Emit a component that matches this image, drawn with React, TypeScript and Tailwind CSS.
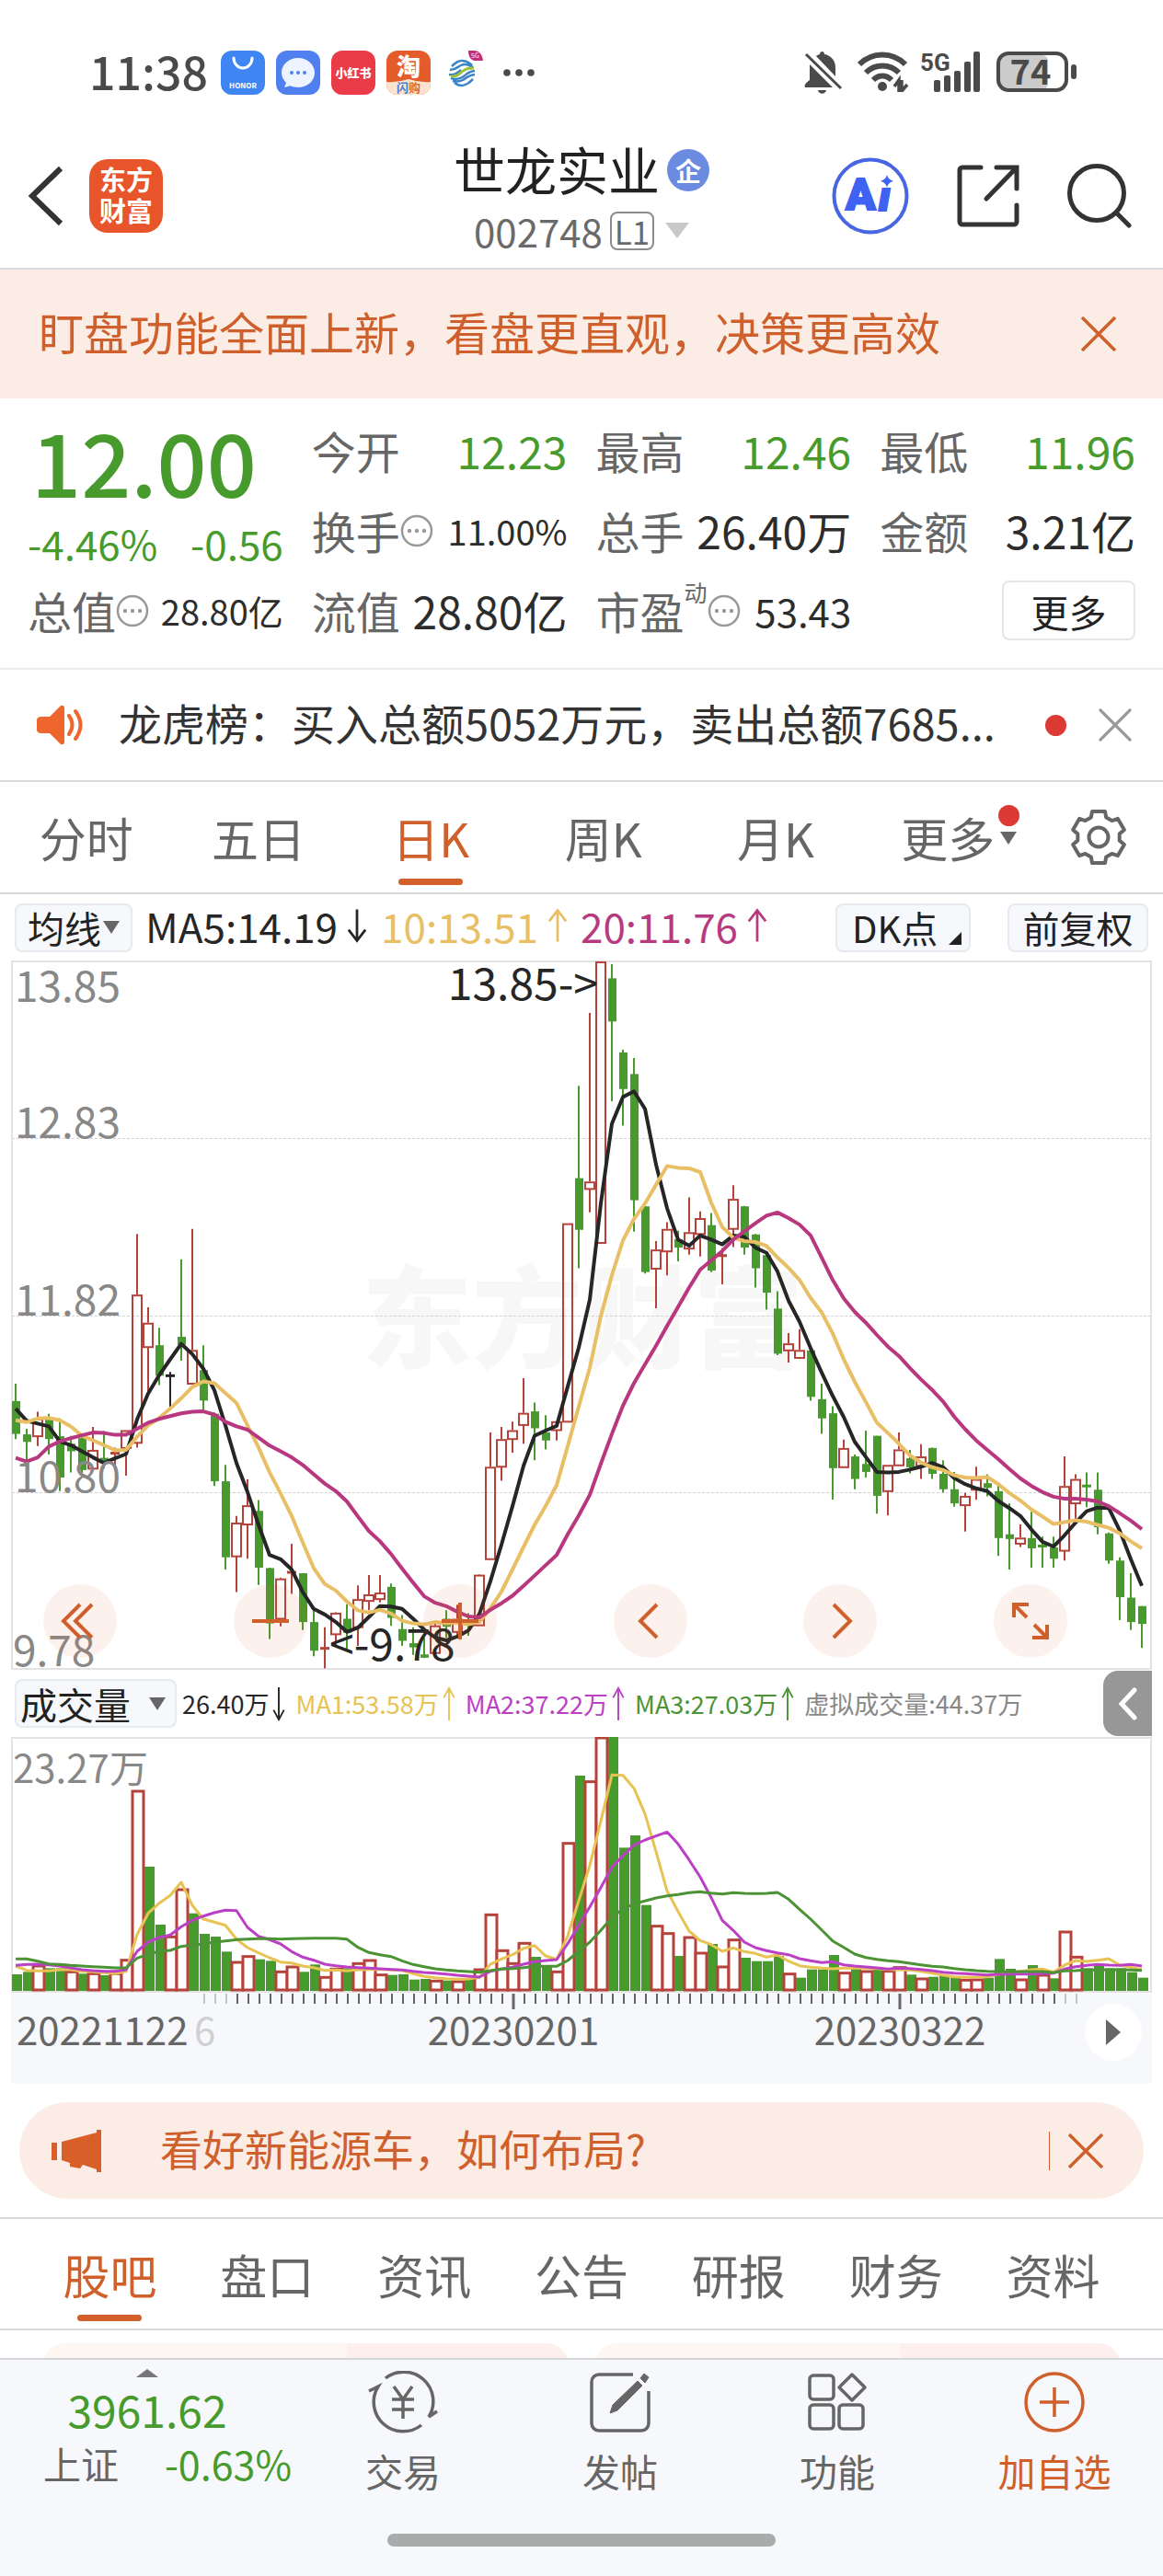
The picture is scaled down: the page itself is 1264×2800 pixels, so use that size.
import type { ReactNode } from 'react';

const FONT = "font-['Noto_Sans_CJK_SC','Noto_Sans',sans-serif]";

const GREEN = '#479b2c';
const RED = '#b5433c';
const BLACK = '#262626';

// g = falling, r = rising, k = unchanged
type Kind = 'g' | 'r' | 'k';
// kind, wick top, wick bottom, body top, body bottom
type Candle = [Kind, number, number, number, number];

const candles: Candle[] = [
  ['g', 929, 1047, 966, 1036], ['g', 1025, 1096, 1037, 1053], ['r', 989, 1062, 1003, 1041],
  ['g', 993, 1080, 1000, 1047], ['g', 1003, 1158, 1041, 1129], ['g', 1040, 1118, 1057, 1073],
  ['g', 1040, 1120, 1045, 1113], ['r', 1021, 1112, 1070, 1110], ['g', 1030, 1110, 1087, 1096],
  ['r', 1065, 1115, 1077, 1077], ['r', 1028, 1125, 1028, 1066], ['r', 610, 1065, 739, 1055],
  ['r', 766, 950, 799, 851], ['g', 810, 932, 847, 912], ['k', 904, 985, 912, 912],
  ['g', 664, 880, 829, 846], ['r', 599, 930, 857, 929], ['g', 847, 985, 900, 965],
  ['g', 990, 1147, 993, 1137], ['g', 1102, 1325, 1137, 1299], ['r', 1211, 1373, 1225, 1297],
  ['r', 1133, 1302, 1188, 1229], ['g', 1177, 1358, 1200, 1321], ['g', 1321, 1473, 1322, 1440],
  ['r', 1342, 1446, 1344, 1430], ['r', 1270, 1377, 1331, 1331], ['g', 1333, 1454, 1333, 1437],
  ['g', 1410, 1510, 1437, 1498], ['r', 1448, 1536, 1493, 1493], ['r', 1416, 1490, 1417, 1463],
  ['g', 1399, 1495, 1430, 1460], ['r', 1359, 1488, 1388, 1448], ['r', 1337, 1412, 1378, 1392],
  ['r', 1337, 1395, 1374, 1388], ['g', 1355, 1445, 1362, 1428], ['g', 1422, 1488, 1452, 1477],
  ['g', 1448, 1507, 1482, 1491], ['g', 1470, 1514, 1506, 1513], ['r', 1440, 1510, 1444, 1503],
  ['g', 1412, 1470, 1430, 1447], ['r', 1400, 1470, 1430, 1458], ['g', 1418, 1466, 1436, 1441],
  ['r', 1335, 1444, 1336, 1444], ['r', 1033, 1303, 1106, 1303], ['r', 1021, 1136, 1047, 1106],
  ['r', 1010, 1076, 1028, 1047], ['r', 917, 1057, 991, 1017], ['g', 969, 1092, 988, 1024],
  ['g', 996, 1069, 1033, 1050], ['r', 1008, 1050, 1009, 1028], ['r', 587, 1010, 587, 1010],
  ['g', 294, 683, 491, 601], ['r', 139, 564, 498, 514], ['r', 29, 629, 29, 629],
  ['g', 35, 327, 65, 157], ['g', 217, 379, 223, 301], ['g', 235, 605, 269, 538],
  ['g', 550, 694, 551, 691], ['r', 625, 768, 643, 684], ['r', 585, 698, 599, 647],
  ['g', 603, 668, 621, 639], ['r', 532, 654, 606, 641], ['r', 562, 658, 576, 610],
  ['g', 565, 691, 591, 688], ['r', 640, 717, 656, 656], ['r', 506, 638, 535, 599],
  ['g', 550, 654, 551, 639], ['g', 610, 724, 611, 683], ['g', 650, 771, 655, 735],
  ['g', 732, 868, 769, 865], ['r', 821, 884, 843, 858], ['r', 813, 875, 857, 874],
  ['g', 857, 965, 858, 957], ['g', 929, 1036, 962, 1003], ['g', 977, 1176, 992, 1109],
  ['r', 1048, 1108, 1066, 1107], ['g', 1080, 1154, 1084, 1132], ['g', 1029, 1129, 1100, 1117],
  ['g', 1040, 1206, 1040, 1168], ['r', 1102, 1210, 1102, 1158], ['r', 1033, 1104, 1069, 1103],
  ['g', 1070, 1120, 1088, 1107], ['r', 1058, 1132, 1084, 1104], ['g', 1065, 1132, 1066, 1121],
  ['g', 1092, 1161, 1121, 1154], ['g', 1117, 1191, 1154, 1184], ['r', 1162, 1244, 1168, 1188],
  ['r', 1106, 1176, 1132, 1155], ['g', 1122, 1169, 1141, 1151], ['g', 1145, 1296, 1158, 1258],
  ['g', 1184, 1325, 1250, 1260], ['r', 1229, 1277, 1257, 1270], ['g', 1202, 1321, 1258, 1280],
  ['g', 1255, 1321, 1275, 1275], ['g', 1255, 1321, 1278, 1302], ['r', 1084, 1306, 1147, 1285],
  ['r', 1122, 1225, 1132, 1184], ['g', 1118, 1192, 1147, 1147], ['g', 1118, 1250, 1155, 1235],
  ['g', 1246, 1313, 1248, 1306], ['g', 1299, 1433, 1306, 1384], ['g', 1333, 1454, 1385, 1437],
  ['g', 1403, 1492, 1403, 1441],
];

const ma5 = [
  982, 1008, 1014, 1020, 1052, 1060, 1073, 1086, 1098, 1088, 1079, 1005, 950, 911, 877, 844, 866, 897, 943, 1018,
  1098, 1160, 1230, 1294, 1303, 1325, 1373, 1409, 1421, 1437, 1458, 1449, 1426, 1403, 1404, 1409, 1430, 1453, 1470, 1476,
  1468, 1455, 1420, 1350, 1272, 1190, 1104, 1040, 1029, 1019, 935, 852, 750, 545, 375, 318, 306, 343, 462, 555,
  622, 635, 613, 622, 632, 613, 616, 639, 650, 690, 752, 797, 853, 905, 955, 1000, 1053, 1085, 1117, 1118,
  1117, 1112, 1106, 1098, 1107, 1130, 1143, 1152, 1158, 1179, 1194, 1211, 1240, 1266, 1276, 1252, 1225, 1201, 1193, 1194,
  1242, 1303, 1360,
];

const ma10 = [
  1007, 1011, 1003, 1002, 1007, 1020, 1040, 1050, 1060, 1071, 1070, 1042, 1018, 1002, 982, 960, 936, 924, 928, 949,
  970, 1018, 1065, 1118, 1163, 1211, 1267, 1322, 1356, 1370, 1393, 1412, 1417, 1411, 1419, 1434, 1440, 1442, 1437, 1440,
  1438, 1442, 1437, 1408, 1372, 1325, 1277, 1230, 1190, 1145, 1062, 978, 895, 785, 698, 624, 578, 545, 505, 465,
  469, 470, 478, 543, 595, 618, 625, 627, 635, 660, 682, 708, 746, 777, 822, 877, 925, 968, 1012, 1034,
  1057, 1082, 1097, 1107, 1113, 1124, 1129, 1130, 1128, 1143, 1162, 1178, 1197, 1212, 1228, 1224, 1220, 1223, 1230, 1236,
  1248, 1265, 1280,
];

const ma20 = [
  1087, 1095, 1086, 1063, 1052, 1045, 1039, 1033, 1034, 1038, 1038, 1025, 1012, 1004, 998, 992, 989, 988, 995, 1010,
  1020, 1027, 1044, 1061, 1073, 1086, 1102, 1122, 1142, 1158, 1180, 1212, 1243, 1265, 1292, 1323, 1353, 1382, 1396, 1403,
  1415, 1425, 1427, 1411, 1397, 1381, 1360, 1338, 1316, 1294, 1250, 1210, 1166, 1100, 1036, 976, 928, 888, 848, 806,
  765, 724, 686, 666, 646, 622, 604, 587, 571, 564, 576, 590, 613, 660, 708, 747, 776, 799, 825, 850,
  870, 896, 920, 942, 967, 999, 1026, 1050, 1070, 1090, 1111, 1131, 1147, 1160, 1170, 1174, 1174, 1176, 1180, 1190,
  1205, 1221, 1239,
];

const volumeKinds =
  'ggrggrgrgrrrggrrggggrrggrrggrrgrrrggggrgrgrrrrrggrrgrrggggrrgrrgrrggggrggggrgrgrrgrgggrrgggrgrgrrgggggg';

// top edge of each bar
const volumes = [
  1005, 997, 975, 985, 985, 994, 1003, 1000, 1008, 1000, 956, 405, 654, 843, 880, 726, 806, 873, 882, 931,
  963, 944, 956, 961, 994, 978, 997, 973, 1012, 985, 985, 967, 957, 1004, 1007, 1005, 1022, 1020, 1024, 1025,
  1026, 1018, 987, 808, 925, 967, 901, 948, 975, 994, 575, 357, 374, 231, 231, 592, 552, 779, 845, 869,
  945, 882, 933, 906, 978, 890, 951, 962, 962, 945, 1001, 1016, 989, 989, 942, 998, 987, 993, 989, 992,
  980, 1006, 1017, 1013, 1008, 1016, 1021, 1020, 1016, 955, 987, 1020, 975, 1005, 1018, 864, 946, 985, 978, 985,
  985, 998, 1016,
];

const vol5 = [
  978, 992, 994, 994, 990, 990, 995, 997, 1000, 1003, 995, 875, 806, 773, 748, 705, 780, 825, 835, 845,
  890, 918, 935, 951, 965, 968, 978, 983, 992, 991, 994, 990, 989, 989, 990, 992, 1003, 1012, 1016, 1019,
  1021, 1020, 1015, 972, 955, 941, 920, 911, 945, 956, 880, 765, 650, 505, 355, 356, 398, 482, 605, 733,
  800, 864, 895, 908, 930, 919, 931, 937, 949, 942, 962, 977, 982, 985, 987, 985, 985, 985, 986, 989,
  990, 991, 995, 1001, 1008, 1013, 1015, 1014, 1013, 1005, 998, 996, 990, 988, 998, 975, 960, 963, 959, 954,
  975, 982, 990,
];

const vol10 = [
  976, 973, 972, 974, 978, 984, 990, 993, 995, 995, 990, 930, 900, 885, 877, 850, 829, 815, 804, 796,
  797, 852, 881, 892, 906, 931, 949, 959, 972, 977, 981, 983, 985, 987, 989, 991, 995, 999, 1001, 1004,
  1008, 1011, 1014, 995, 988, 982, 972, 964, 960, 957, 905, 845, 785, 722, 656, 618, 584, 567, 554, 541,
  580, 632, 688, 755, 829, 862, 900, 918, 928, 935, 941, 954, 961, 967, 964, 974, 978, 981, 984, 988,
  985, 986, 989, 993, 998, 1001, 1003, 1005, 1007, 1005, 1004, 1004, 1004, 1003, 1001, 988, 980, 976, 973, 975,
  976, 973, 978,
];

const vol20 = [
  955, 955, 962, 971, 973, 976, 978, 980, 982, 984, 984, 952, 940, 930, 927, 914, 910, 906, 900, 896,
  892, 890, 889, 889, 890, 889, 888, 887, 887, 887, 890, 917, 934, 941, 947, 961, 973, 980, 987, 991,
  994, 996, 998, 993, 988, 986, 983, 979, 979, 979, 960, 930, 900, 862, 820, 792, 775, 766, 756, 749,
  745, 739, 736, 740, 743, 739, 741, 742, 741, 738, 760, 793, 825, 860, 896, 917, 939, 950, 956, 961,
  964, 969, 974, 979, 981, 986, 990, 993, 995, 996, 997, 996, 996, 996, 1000, 994, 993, 991, 991, 990,
  990, 991, 992,
];

const barX = (i: number) => 5 + 12 * i;
const priceY = (v: number) => (v - 27) * 0.51;
const volumeY = (v: number) => (v - 231) / 3;
const toPoints = (values: number[], y: (v: number) => number) =>
  values.map((v, i) => `${barX(i)},${y(v).toFixed(1)}`).join(' ');

const colorOf = (kind: string) => (kind === 'g' ? GREEN : kind === 'r' ? RED : BLACK);

function CandleMark({ index, candle }: { index: number; candle: Candle }) {
  const [kind, high, low, open, close] = candle;
  const x = barX(index);
  const top = priceY(open);
  const bottom = priceY(close);
  const color = colorOf(kind);
  if (bottom - top < 1) {
    return (
      <g stroke={color} strokeWidth="2">
        <path d={`M${x} ${priceY(high)}V${priceY(low)}`} />
        <path d={`M${x - 5} ${top}H${x + 5}`} strokeWidth="3" />
      </g>
    );
  }
  if (kind === 'g') {
    return (
      <g>
        <path d={`M${x} ${priceY(high)}V${priceY(low)}`} stroke={color} strokeWidth="2" />
        <rect x={x - 4} y={top} width="9" height={bottom - top} fill={color} />
      </g>
    );
  }
  return (
    <g stroke={color} strokeWidth="2" fill="none">
      <path d={`M${x} ${priceY(high)}V${top}M${x} ${bottom}V${priceY(low)}`} />
      <rect x={x - 5} y={top + 1} width="10" height={Math.max(bottom - top - 1, 2)} />
    </g>
  );
}

function Close({ size, color }: { size: number; color: string }) {
  return (
    <svg width={size} height={size} viewBox="0 0 38 38" fill="none" stroke={color} strokeWidth="3.5">
      <path d="M1 1L37 37M37 1L1 37" />
    </svg>
  );
}

function Down({ color, w, h }: { color: string; w: number; h: number }) {
  return (
    <svg width={w} height={h} viewBox="0 0 10 10" preserveAspectRatio="none" fill={color}>
      <path d="M0 0H10L5 10Z" />
    </svg>
  );
}

function Trend({ up, small }: { up?: boolean; small?: boolean }) {
  return (
    <svg
      width={small ? 14 : 22}
      height="38"
      viewBox={small ? '5 0 14 40' : '0 0 24 40'}
      fill="none"
      stroke="currentColor"
      strokeWidth={small ? 2 : 3}
    >
      {small && up && <path d="M12 39V3M6 13L12 2L18 13" />}
      {small && !up && <path d="M12 1V37M6 27L12 38L18 27" />}
      {!small && up && <path d="M12 39V3M2 15L12 2L22 15" />}
      {!small && !up && <path d="M12 1V37M2 25L12 38L22 25" />}
    </svg>
  );
}

function Dots() {
  return (
    <svg width="36" height="36" viewBox="0 0 36 36" fill="none" className="shrink-0">
      <circle cx="18" cy="18" r="16" stroke="#999" strokeWidth="2.5" />
      <g fill="#999">
        <circle cx="10" cy="18" r="2.2" />
        <circle cx="18" cy="18" r="2.2" />
        <circle cx="26" cy="18" r="2.2" />
      </g>
    </svg>
  );
}

function StatusBar() {
  return (
    <div className="flex h-[134px] items-center justify-between pt-6 pr-[93px] pl-[97px] text-[#4a4a4a]">
      <div className="flex items-center gap-3">
        <span className="w-[131px] pb-1.5 text-[50px] leading-[74px] font-medium">11:38</span>
        <svg width="48" height="48" viewBox="0 0 48 48" className="overflow-visible">
          <rect width="48" height="48" rx="12" fill="#3f86f3" />
          <path d="M14 8a10 11 0 0 0 20 0" fill="none" stroke="#fff" strokeWidth="3" strokeLinecap="round" />
          <text x="24" y="41" textAnchor="middle" fontSize="8" fontWeight="700" fill="#fff">
            HONOR
          </text>
        </svg>
        <svg width="48" height="48" viewBox="0 0 48 48">
          <rect width="48" height="48" rx="12" fill="#5080f0" />
          <path d="M24 8c10 0 18 7 18 16s-8 16-18 16c-3 0-6-.6-8.500-1.700L9 40l2-5C8 32 6 28 6 24 6 15 14 8 24 8Z" fill="#eef4ff" />
          <g fill="#5080f0">
            <circle cx="17" cy="24" r="2" />
            <circle cx="24" cy="24" r="2" />
            <circle cx="31" cy="24" r="2" />
          </g>
        </svg>
        <span className="flex size-12 items-center justify-center rounded-xl bg-[#ea3b49] text-[13px] font-black text-white">
          小红书
        </span>
        <svg width="48" height="48" viewBox="0 0 48 48" className="overflow-visible">
          <rect width="48" height="48" rx="12" fill="#e55c2b" />
          <path d="M0 34Q12 35 24 31Q36 35 48 34V36a12 12 0 0 1-12 12H12A12 12 0 0 1 0 36Z" fill="#fbe3cf" />
          <text x="24" y="27" textAnchor="middle" fontSize="26" fontWeight="900" fill="#fff">
            淘
          </text>
          <text x="24" y="45" textAnchor="middle" fontSize="13" fontWeight="700" fill="#e0682e">
            <tspan fill="#3d7fd6">闪</tspan>购
          </text>
        </svg>
        <svg width="54" height="48" viewBox="0 0 54 48" fill="none" className="overflow-visible">
          <g strokeWidth="2.500" stroke="#3a83c6">
            <path d="M11 17c4-4 7-6 11-6s8 2 11 5M9 21c6 0 8-3 12-5s8-1 13 2M8 26c7 1 9-2 13-5" />
            <path d="M36 22c-6 0-8 3-12 6s-8 4-14 2M36 26c-6 0-9 4-13 6s-7 2-11 1M34 31c-4 4-8 7-12 7s-5-1-8-3" />
          </g>
          <path d="M10 28c7 0 8-2 12-5 4-3 6-4 13-4" stroke="#9cc23c" strokeWidth="3" />
          <path d="M29 0h6c6 0 9 4 10 11H36c-5-1-7-5-7-11Z" fill="#c42c77" />
          <text x="32" y="8" fontSize="7" fill="#fff">
            5G
          </text>
        </svg>
        <svg width="36" height="8" viewBox="0 0 36 8" fill="#4a4a4a">
          <circle cx="5" cy="4" r="3.800" />
          <circle cx="18" cy="4" r="3.800" />
          <circle cx="31" cy="4" r="3.800" />
        </svg>
      </div>
      <div className="flex items-center">
        <svg width="42" height="48" viewBox="0 0 42 48" fill="#4a4a4a">
          <path d="M13 6c1-1 3-2 4-2 0-4 5-4 5 0 7 1 12 7 12 14v10Z" />
          <path d="M6 15L31 40H1c-1-3 0-4 5-8Z" />
          <path d="M15 43h9c-1 5-8 5-9 0Z" />
          <path d="M2 4L40 41" stroke="#4a4a4a" strokeWidth="3" />
        </svg>
        <svg width="58" height="48" viewBox="0 0 58 48" className="ml-4" fill="none" stroke="#4a4a4a" strokeWidth="6">
          <path d="M2 15C16 1 38 1 52 15" />
          <path d="M9 24c10-10 26-10 36 0" />
          <path d="M17 32c6-6 14-6 20 0" />
          <circle cx="27" cy="39" r="5" fill="#4a4a4a" stroke="none" />
          <path d="M40 39l5-7v13M48 32v13M48 44l6-7" strokeWidth="3.500" />
        </svg>
        <svg width="66" height="48" viewBox="0 0 66 48" className="ml-[10px] overflow-visible" fill="#4a4a4a">
          <text x="0" y="22" fontSize="26" fontWeight="700" className="font-[Roboto,sans-serif]">
            5G
          </text>
          <rect x="15" y="32" width="7" height="13" rx="2" />
          <rect x="26" y="27" width="7" height="18" rx="2" />
          <rect x="37" y="22" width="7" height="23" rx="2" />
          <rect x="48" y="12" width="7" height="33" rx="2" />
          <rect x="58" y="1" width="7" height="44" rx="2" />
        </svg>
        <svg width="88" height="48" viewBox="0 0 88 48" className="ml-[17px] overflow-visible">
          <rect x="4" y="5" width="52" height="37" rx="6" fill="#cbcbcb" />
          <rect x="2" y="3" width="74" height="40" rx="11" fill="none" stroke="#4a4a4a" strokeWidth="4" />
          <rect x="81" y="15" width="6" height="16" rx="3" fill="#4a4a4a" />
          <text x="37" y="37" textAnchor="middle" fontSize="38" fontWeight="700" fill="#4a4a4a">
            74
          </text>
        </svg>
      </div>
    </div>
  );
}

function Header() {
  return (
    <header className="grid h-[159px] grid-cols-[1fr_auto_1fr] items-center border-b-2 border-[#dcdcdf] pr-[34px] pl-[30px]">
      <div className="flex items-center gap-7">
        <button aria-label="返回">
          <svg width="39" height="66" viewBox="0 0 39 66" fill="none" stroke="#333" strokeWidth="6">
            <path d="M36 3L5 33L36 63" />
          </svg>
        </button>
        <p className="size-20 rounded-[20px] bg-[#e9552b] pt-1 text-center text-[29px] leading-[34px] font-bold text-white">
          东方
          <br />
          财富
        </p>
      </div>
      <div className="flex flex-col items-center pt-2 pl-1">
        <div className="flex h-[68px] items-center gap-2">
          <h1 className="text-[56px] leading-[68px] text-[#222]">世龙实业</h1>
          <span className="mt-1 flex size-[46px] items-center justify-center rounded-full bg-[#6a8be0] text-[28px] leading-none font-bold text-white">
            企
          </span>
        </div>
        <div className="flex h-[68px] items-center text-[42px] leading-[68px] text-[#6a6a6a]">
          002748
          <span className="ml-2 flex h-[42px] w-12 items-center justify-center rounded-lg border-2 border-[#8c8c8c] text-[35px] leading-none">
            L1
          </span>
          <span className="ml-3">
            <Down color="#c8c8c8" w={26} h={17} />
          </span>
        </div>
      </div>
      <div className="flex items-center justify-end gap-[52px]">
        <button aria-label="Ai">
          <svg width="84" height="84" viewBox="0 0 84 84" fill="none">
            <circle cx="42" cy="42" r="39.500" stroke="#4866e2" strokeWidth="4" />
            <g fontSize="48" fontWeight="900" fill="#4062f3" stroke="#4062f3" strokeWidth="2" className="font-[Roboto,sans-serif]">
              <text x="15" y="57">A</text>
              <text x="51" y="58" fontStyle="italic">i</text>
            </g>
            <path d="M52 16H68V33H52Z" fill="#fff" />
            <path d="M60 19c1 4 3 5 7 7-4 1-6 3-7 7-1-4-3-6-7-7 4-2 6-3 7-7Z" fill="#4062f3" />
          </svg>
        </button>
        <button aria-label="分享">
          <svg width="68" height="68" viewBox="0 0 68 68" fill="none" stroke="#333" strokeWidth="5" strokeLinecap="round">
            <path d="M26 3H6a3 3 0 0 0-3 3V62a3 3 0 0 0 3 3H62a3 3 0 0 0 3-3V44" />
            <path d="M43 3H65V26M64 4L32 37" />
          </svg>
        </button>
        <button aria-label="搜索">
          <svg width="70" height="70" viewBox="0 0 70 70" fill="none" stroke="#333" strokeWidth="5" strokeLinecap="round">
            <circle cx="32" cy="32" r="29.500" />
            <path d="M53 53L67 67" />
          </svg>
        </button>
      </div>
    </header>
  );
}

function Quote({ label, value, extra, size = 'text-[48px]', color = 'text-[#2c2c2c]' }: {
  label: string;
  value: string;
  extra?: ReactNode;
  size?: string;
  color?: string;
}) {
  return (
    <div className="flex h-[87px] items-center justify-between whitespace-nowrap">
      <dt className="flex items-center text-[48px] leading-[87px] text-[#666]">
        {label}
        {extra}
      </dt>
      <dd className={`${size} ${color} leading-[87px]`}>{value}</dd>
    </div>
  );
}

function Quotes() {
  return (
    <dl className="grid grid-cols-4 gap-x-[31px] border-b-2 border-[#ececec] px-[30px] pt-[13px] pb-[19px]">
      <div className="row-span-2 text-[#479b2c]">
        <div className="h-[114px] pl-1 text-[95px] leading-[108px] font-medium">12.00</div>
        <div className="flex justify-between text-[44px] leading-[60px]">
          <span>-4.46%</span>
          <span>-0.56</span>
        </div>
      </div>
      <Quote label="今开" value="12.23" color="text-[#479b2c]" />
      <Quote label="最高" value="12.46" color="text-[#479b2c]" />
      <Quote label="最低" value="11.96" color="text-[#479b2c]" />
      <Quote label="换手" value="11.00%" extra={<Dots />} size="text-[38px]" />
      <Quote label="总手" value="26.40万" />
      <Quote label="金额" value="3.21亿" />
      <Quote label="总值" value="28.80亿" extra={<Dots />} size="text-[38px]" />
      <Quote label="流值" value="28.80亿" />
      <Quote
        label="市盈"
        value="53.43"
        extra={
          <>
            <sup className="-top-5 text-[25px] leading-none">动</sup>
            <Dots />
          </>
        }
        size="text-[42px]"
      />
      <div className="flex items-center justify-end">
        <button className="h-[65px] w-[145px] rounded-lg border-2 border-[#e6e6e6] text-[41px] leading-[56px] text-[#222]">
          更多
        </button>
      </div>
    </dl>
  );
}

function TickerRow() {
  return (
    <div className="flex h-[122px] items-center border-b-2 border-[#dadada] pr-[34px] pl-[40px]">
      <svg width="52" height="44" viewBox="0 0 52 44" fill="#ee652d">
        <path d="M5 13H14L26 1q4-1 4 3V40q0 4-4 3L14 31H5q-5 0-5-4V17q0-4 5-4Z" />
        <path d="M35 12q7 10 0 20M42 7q11 15 0 30" fill="none" stroke="#ee652d" strokeWidth="4" strokeLinecap="round" />
      </svg>
      <p className="ml-[37px] flex-1 pb-1.5 text-[47px] leading-[60px] whitespace-nowrap text-[#333]">
        龙虎榜：买入总额5052万元，卖出总额7685...
      </p>
      <span className="mr-[35px] size-[23px] rounded-full bg-[#dc3a34]" />
      <button aria-label="关闭">
        <Close size={36} color="#999" />
      </button>
    </div>
  );
}

const gearPath =
  'M' +
  Array.from({ length: 6 }, (_, k) => {
    const at = (deg: number, r: number) => {
      const rad = (deg * Math.PI) / 180;
      return `${(31 + r * Math.cos(rad)).toFixed(1)} ${(31 + r * Math.sin(rad)).toFixed(1)}`;
    };
    const a = k * 60 - 90;
    return [at(a - 14, 29), at(a + 14, 29), at(a + 21, 23), at(a + 39, 23)].join('L');
  }).join('L') +
  'Z';

function ChartTabs() {
  const tabs = ['分时', '五日', '日K', '周K', '月K'];
  return (
    <nav className="flex h-[122px] items-stretch border-b-2 border-[#dadada] text-[51px] leading-[116px]">
      {tabs.map((tab) => (
        <button key={tab} className={tab === '日K' ? 'relative flex-1 text-[#cf602c]' : 'flex-1 text-[#666]'}>
          {tab}
          {tab === '日K' && <span className="absolute inset-x-0 bottom-2 mx-auto h-[7px] w-[70px] rounded-full bg-[#d3602c]" />}
        </button>
      ))}
      <button className="relative flex-1 text-[#666]">
        更多
        <span className="absolute top-[25px] right-4 size-[23px] rounded-full bg-[#dc3a34]" />
        <span className="absolute top-[54px] right-[19px]">
          <Down color="#666" w={18} h={14} />
        </span>
      </button>
      <button aria-label="设置" className="flex w-[140px] items-center justify-center">
        <svg width="62" height="62" viewBox="0 0 62 62" fill="none" stroke="#666" strokeWidth="4" strokeLinejoin="round">
          <path d={gearPath} />
          <circle cx="31" cy="31" r="10.500" />
        </svg>
      </button>
    </nav>
  );
}

const chipClass = 'flex h-[53px] items-center rounded-lg border-2 border-[#e6e9ed] bg-[#f6f8fb] text-[40px] leading-[46px] text-[#222]';

function PriceChart() {
  const controls: [string, ReactNode][] = [
    ['最左', <path key="a" d="M40 22L22 40L40 58M53 22L35 40L53 58" />],
    ['缩小', <path key="b" d="M20 40H60" />],
    ['放大', <path key="c" d="M20 40H60M40 20V60" />],
    ['左移', <path key="d" d="M47 22L29 40L47 58" />],
    ['右移', <path key="e" d="M33 22L51 40L33 58" />],
    ['全屏', <path key="f" d="M36 36L22 22M22 36V22H38M44 44L58 58M58 44V58H42" />],
  ];
  return (
    <section>
      <div className="flex h-[72px] items-center pr-4 pl-4 text-[44px] leading-[66px] whitespace-nowrap">
        <button className={`${chipClass} w-[128px] justify-center gap-[2px]`}>
          均线
          <Down color="#666" w={18} h={14} />
        </button>
        <span className="ml-[14px] flex items-center gap-[10px] pb-1 text-[#262626]">
          MA5:14.19
          <Trend />
        </span>
        <span className="ml-[15px] flex items-center gap-[10px] pb-1 text-[#e9bf66]">
          10:13.51
          <Trend up />
        </span>
        <span className="ml-[14px] flex items-center gap-[10px] pb-1 text-[#b73a80]">
          20:11.76
          <Trend up />
        </span>
        <button className={`${chipClass} ml-auto w-[147px] gap-3 pl-4`}>
          DK点
          <svg width="14" height="14" viewBox="0 0 14 14" className="mt-6" fill="#222">
            <path d="M14 0V14H0Z" />
          </svg>
        </button>
        <button className={`${chipClass} ml-10 w-[153px] justify-center`}>前复权</button>
      </div>
      <div className="relative mx-3">
        <svg viewBox="0 0 1240 771" className="block h-auto w-full overflow-visible">
          <text x="381" y="434" fontSize="120" fontWeight="900" fill="#f7f7f7">
            东方财富
          </text>
          <g stroke="#d2d2d2" strokeWidth="1" strokeDasharray="3 2">
            <path d="M1 193.500H1239M1 386.500H1239M1 578.500H1239" />
          </g>
          <rect x="1" y="1" width="1238" height="769" fill="none" stroke="#e2e2e2" strokeWidth="2" />
          {candles.map((c, i) => (
            <CandleMark key={i} index={i} candle={c} />
          ))}
          <g fill="none" strokeWidth="4" strokeLinejoin="round">
            <polyline points={toPoints(ma5, priceY)} stroke={BLACK} />
            <polyline points={toPoints(ma10, priceY)} stroke="#e9bf66" />
            <polyline points={toPoints(ma20, priceY)} stroke="#b8377f" />
          </g>
          <g fontSize="46" fill="#888">
            <text x="4" y="45">13.85</text>
            <text x="4" y="193">12.83</text>
            <text x="4" y="386">11.82</text>
            <text x="4" y="578">10.80</text>
            <text x="2" y="767">9.78</text>
          </g>
          <g fontSize="48" fill={BLACK}>
            <text x="638" y="43" textAnchor="end">{'13.85->'}</text>
            <text x="346" y="761">{'<-9.78'}</text>
          </g>
        </svg>
        <div className="absolute inset-x-0 bottom-[13px] flex justify-between pr-[92px] pl-[35px]">
          {controls.map(([label, icon]) => (
            <button key={label} aria-label={label} className="size-20 rounded-full bg-[#d9622b]/9">
              <svg viewBox="0 0 80 80" fill="none" stroke="#cf602c" strokeWidth="4">
                {icon}
              </svg>
            </button>
          ))}
        </div>
      </div>
    </section>
  );
}

function VolumeChart() {
  const ticks = Array.from({ length: 80 }, (_, k) => k + 17);
  return (
    <section>
      <div className="flex h-[73px] items-center pr-3 pl-4 text-[27px] leading-[40px] whitespace-nowrap">
        <button className={`${chipClass} w-[176px] shrink-0 justify-between pr-[10px] pl-1`}>
          成交量
          <Down color="#666" w={18} h={14} />
        </button>
        <span className="ml-[6px] flex items-center gap-1 text-[#262626]">
          26.40万
          <Trend small />
        </span>
        <span className="ml-[11px] flex items-center gap-1 text-[#e6c352]">
          MA1:53.58万
          <Trend up small />
        </span>
        <span className="ml-[11px] flex items-center gap-1 text-[#bb40c6]">
          MA2:37.22万
          <Trend up small />
        </span>
        <span className="ml-[11px] flex items-center gap-1 text-[#4b9334]">
          MA3:27.03万
          <Trend up small />
        </span>
        <span className="ml-[11px] text-[#888]">虚拟成交量:44.37万</span>
        <button aria-label="展开" className="ml-auto flex h-[71px] w-[53px] items-center justify-center rounded-l-2xl bg-[#979797]">
          <svg width="22" height="36" viewBox="0 0 22 36" fill="none" stroke="#fff" strokeWidth="5" strokeLinecap="round">
            <path d="M18 3L4 18L18 33" />
          </svg>
        </button>
      </div>
      <div className="mx-3">
        <svg viewBox="0 0 1240 279" className="block h-auto w-full">
          <rect x="1" y="1" width="1238" height="276" fill="none" stroke="#e2e2e2" strokeWidth="2" />
          {volumes.map((v, i) => {
            const y = volumeY(v);
            return volumeKinds[i] === 'g' ? (
              <rect key={i} x={barX(i) - 4} y={y} width="11" height={276 - y} fill={GREEN} />
            ) : (
              <rect key={i} x={barX(i) - 5} y={y + 1} width="12" height={274 - y} fill="#fff" stroke={RED} strokeWidth="3" />
            );
          })}
          <g fill="none" strokeWidth="3" strokeLinejoin="round">
            <polyline points={toPoints(vol5, volumeY)} stroke="#e6c352" />
            <polyline points={toPoints(vol10, volumeY)} stroke="#bb40c6" />
            <polyline points={toPoints(vol20, volumeY)} stroke="#4b9334" />
          </g>
          <text x="2" y="50" fontSize="42" fill="#888">
            23.27万
          </text>
        </svg>
      </div>
      <div className="relative mx-3 bg-[#f7f8fb]">
        <svg viewBox="0 0 1240 98" className="block h-auto w-full">
          {ticks.map((i) => {
            const major = i === 45 || i === 80;
            const faded = i < 20 || i > 94;
            return (
              <path
                key={i}
                d={`M${barX(i) + 1} 0V${major ? 17 : 11}`}
                stroke={faded ? '#c4c4c6' : '#666'}
                strokeWidth={major ? 3 : 2}
              />
            );
          })}
          <g fontSize="42" fill="#666">
            <text x="6" y="56">20221122</text>
            <text x="199" y="56" fill="#d0d0d2">6</text>
            <text x="546" y="56" textAnchor="middle">20230201</text>
            <text x="966" y="56" textAnchor="middle">20230322</text>
          </g>
        </svg>
        <button aria-label="播放" className="absolute top-[11px] right-[11px] flex size-[62px] items-center justify-center rounded-full bg-white">
          <svg width="16" height="28" viewBox="0 0 16 28" fill="#666">
            <path d="M0 0L16 14L0 28Z" />
          </svg>
        </button>
      </div>
    </section>
  );
}

function PromoPill() {
  return (
    <div className="mx-[21px] my-5 flex h-[105px] items-center rounded-full bg-[#fbede5] pr-[44px] pl-[35px] text-[#cf602c]">
      <svg width="54" height="46" viewBox="0 0 54 46" fill="#d85f28">
        <path d="M0 14H6V33H0ZM11 13L49 3V0H54V46H49V43L34 38L31 42L20 40V36L11 33Z" />
      </svg>
      <p className="ml-[64px] flex-1 pb-2 text-[46px] leading-[60px]">看好新能源车，如何布局?</p>
      <span className="mr-5 h-[42px] w-px bg-[#cf602c]" />
      <button aria-label="关闭">
        <Close size={38} color="#cf602c" />
      </button>
    </div>
  );
}

function InfoTabs() {
  const tabs = ['股吧', '盘口', '资讯', '公告', '研报', '财务', '资料'];
  return (
    <nav className="flex h-[123px] border-y-2 border-[#d9d9db] px-[34px] text-[51px] leading-[112px]">
      {tabs.map((tab, i) => (
        <button key={tab} className={i === 0 ? 'relative flex-1 text-[#cf602c]' : 'flex-1 text-[#666]'}>
          {tab}
          {i === 0 && <span className="absolute inset-x-0 bottom-2 mx-auto h-[7px] w-[70px] rounded-full bg-[#d3602c]" />}
        </button>
      ))}
    </nav>
  );
}

function BottomBar() {
  const items: [string, ReactNode][] = [
    [
      '交易',
      <g key="t">
        <path d="M19 8A32 32 0 0 1 66 50L75 44" />
        <path d="M1 22L11 17A32 32 0 0 0 58 59" />
        <path d="M28 17L38 31L48 17M26 31H50M26 42H50M38 31V52" />
      </g>,
    ],
    [
      '发帖',
      <g key="p">
        <path d="M52 4H15a8 8 0 0 0-8 8V57a8 8 0 0 0 8 8H61a8 8 0 0 0 8-8V22" />
        <path d="M27 46L30 37L57 11L62 16L35 43ZM60 8L64 3L69 7L65 13Z" fill="currentColor" strokeWidth="1" />
      </g>,
    ],
    [
      '功能',
      <g key="f">
        <rect x="8" y="5" width="26" height="26" rx="4" />
        <rect x="8" y="37" width="26" height="26" rx="4" />
        <rect x="40" y="37" width="26" height="26" rx="4" />
        <path d="M54 4L68 18L54 32L40 18Z" strokeLinejoin="round" />
      </g>,
    ],
    [
      '加自选',
      <g key="a">
        <circle cx="38" cy="34" r="31" />
        <path d="M22 34H54M38 18V50" />
      </g>,
    ],
  ];
  return (
    <footer className="border-t-2 border-[#d3d5d8] bg-[#f6f8fb]">
      <div className="grid h-[189px] grid-cols-[320px_repeat(4,1fr)]">
        <div className="flex flex-col items-center pt-[10px]">
          <svg width="24" height="9" viewBox="0 0 24 9" fill="#777">
            <path d="M12 0L24 9H0Z" />
          </svg>
          <div className="mt-1 text-[48px] leading-[60px] text-[#479b2c]">3961.62</div>
          <div className="flex items-center gap-[50px] pl-11 text-[41px] leading-[58px] text-[#666]">
            上证
            <span className="text-[43px] text-[#479b2c]">-0.63%</span>
          </div>
        </div>
        {items.map(([label, icon]) => (
          <button
            key={label}
            className={`flex flex-col items-center pt-3 text-[41px] leading-[60px] ${
              label === '加自选' ? 'text-[#cf602c]' : 'text-[#666]'
            }`}
          >
            <svg width="76" height="68" viewBox="0 0 76 68" fill="none" stroke="currentColor" strokeWidth="3.500">
              {icon}
            </svg>
            <span className="mt-[10px]">{label}</span>
          </button>
        ))}
      </div>
      <div className="flex h-[46px] justify-center">
        <span className="h-[14px] w-[422px] rounded-full bg-[#aaacab]" />
      </div>
    </footer>
  );
}

export default function App() {
  return (
    <div className={`${FONT} bg-white`}>
      <StatusBar />
      <Header />
      <div className="flex h-[140px] items-center justify-between bg-[#fbede5] pr-[51px] pl-[42px]">
        <p className="pb-1.5 text-[49px] leading-[64px] whitespace-nowrap text-[#cf602c]">盯盘功能全面上新，看盘更直观，决策更高效</p>
        <button aria-label="关闭">
          <Close size={38} color="#cf602c" />
        </button>
      </div>
      <Quotes />
      <TickerRow />
      <ChartTabs />
      <PriceChart />
      <VolumeChart />
      <PromoPill />
      <InfoTabs />
      <div className="flex h-[30px] gap-[29px] overflow-hidden px-[46px] pt-[14px]">
        {[0, 1].map((n) => (
          <div key={n} className="flex h-10 flex-1 overflow-hidden rounded-t-3xl">
            <div className="w-[58%] bg-[#fef6f1]" />
            <div className="flex-1 bg-[#fcefed]" />
          </div>
        ))}
      </div>
      <BottomBar />
    </div>
  );
}
